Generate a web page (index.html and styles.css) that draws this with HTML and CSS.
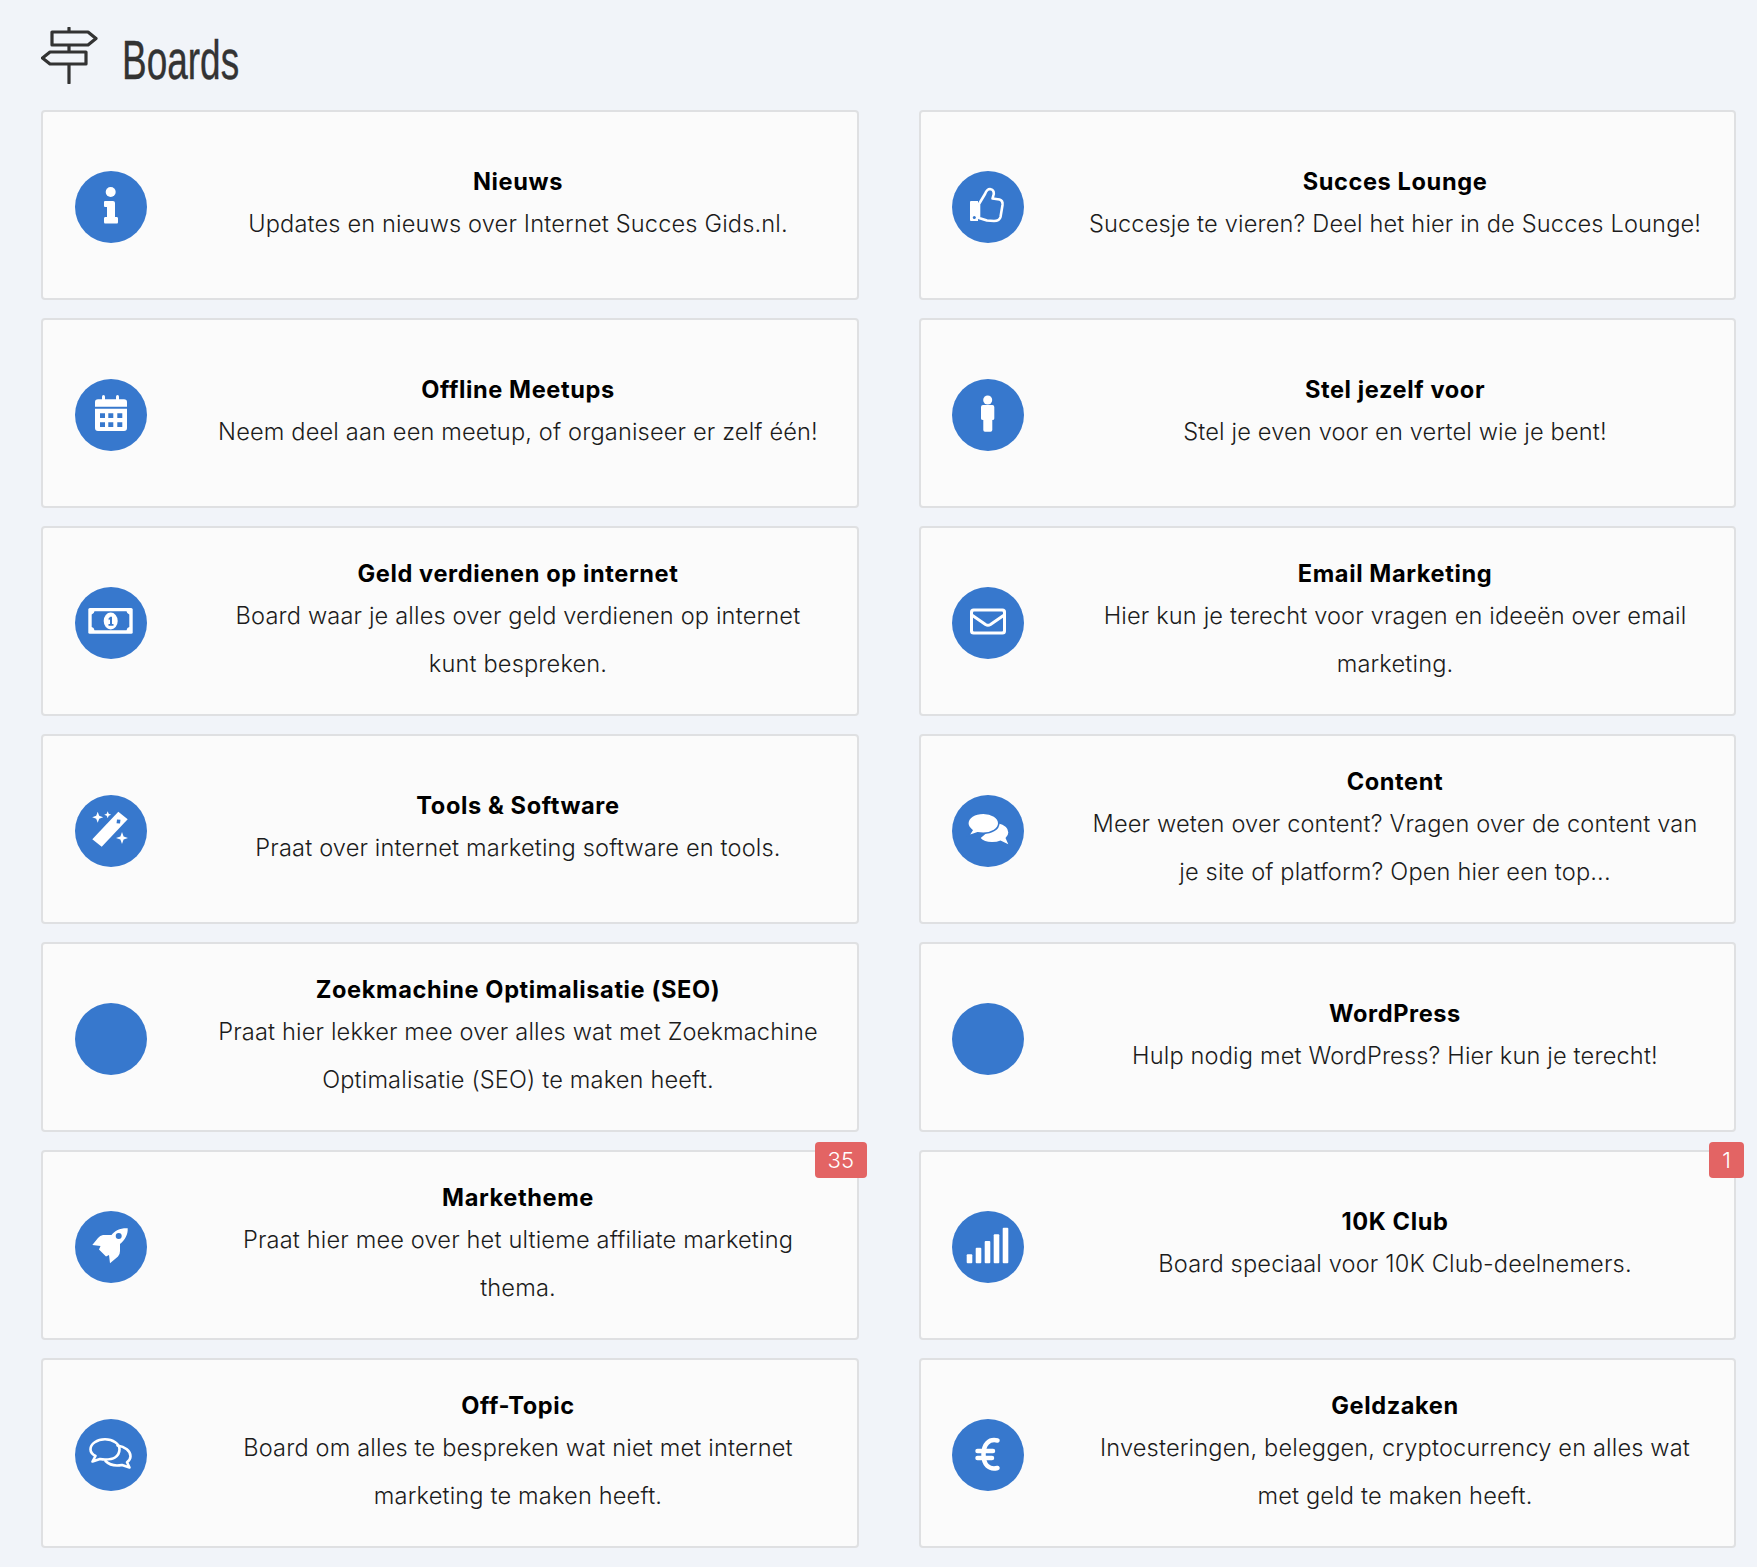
FILE: index.html
```html
<!DOCTYPE html>
<html lang="nl">
<head>
<meta charset="utf-8">
<title>Boards</title>
<link rel="stylesheet" href="styles.css">
</head>
<body>
<header class="page-head">
  <svg class="signs" viewBox="41 27 57 57"><path d="M69 28V32M69 45V52M69 64V83M52 32H88L96 38.500 88 45H52ZM86 52H50L42.500 58 50 64H86Z"/></svg>
  <h1 class="page-title">Boards</h1>
</header>
<main class="boards">
  <a class="card">
    <span class="icon"><svg viewBox="0 0 72 72"><circle class="w" cx="35.700" cy="21" r="5"/><path class="w" d="M30 30H38Q40 30 40 32V46H42Q43 46 43 47.500V51Q43 52.500 42 52.500H30Q29 52.500 29 51V47.500Q29 46 30 46H32V36H30Q29 36 29 35V31Q29 30 30 30Z"/></svg></span>
    <div class="text"><h2>Nieuws</h2><p>Updates en nieuws over Internet Succes Gids.nl.</p></div>
  </a>
  <a class="card">
    <span class="icon"><svg viewBox="0 0 72 72"><path class="w" d="M18 31Q18 30 19 30H26V50H19Q18 50 18 49Z"/><circle class="b" cx="22.300" cy="46.500" r="1.500"/><path class="o" d="M27 33L33 23Q35 18 38 18 42 18.500 41.800 23L40.500 27.500 47.500 28.500Q51 29.500 50.500 34L48.500 46Q47.500 50 42 50L35 49.500 27 47Z"/></svg></span>
    <div class="text"><h2>Succes Lounge</h2><p>Succesje te vieren? Deel het hier in de Succes Lounge!</p></div>
  </a>
  <a class="card">
    <span class="icon"><svg viewBox="0 0 72 72"><rect class="w" x="27" y="16" width="3" height="6" rx="1.500"/><rect class="w" x="41" y="16" width="3" height="6" rx="1.500"/><path class="w" d="M20 23Q20 20.300 23 20.300H49Q52 20.300 52 23V27.700H20ZM20 29.700H52V49Q52 52 49 52H23Q20 52 20 49Z"/><path class="b" d="M25 34.300h5v4.700h-5zM33.300 34.300h5v4.700h-5zM42.300 34.300h5v4.700h-5zM25 43.300h5v4.700h-5zM33.300 43.300h5v4.700h-5zM42.300 43.300h5v4.700h-5z"/></svg></span>
    <div class="text"><h2>Offline Meetups</h2><p>Neem deel aan een meetup, of organiseer er zelf één!</p></div>
  </a>
  <a class="card">
    <span class="icon"><svg viewBox="0 0 72 72"><circle class="w" cx="35.700" cy="21" r="4.500"/><path class="w" d="M31 26H40.300Q42.300 26 42.300 28V39.500Q42.300 41 40.300 41V51Q40.300 52.700 38.500 52.700H33Q31.300 52.700 31.300 51V41Q29 41 29 39.500V28Q29 26 31 26Z"/></svg></span>
    <div class="text"><h2>Stel jezelf voor</h2><p>Stel je even voor en vertel wie je bent!</p></div>
  </a>
  <a class="card">
    <span class="icon"><svg viewBox="0 0 72 72"><rect class="w" x="13.300" y="21" width="44.400" height="25.700" rx="1.500"/><path class="b" d="M19.500 24.300H51.500Q52 27 54.300 27.500V40Q52 40.500 51.500 43.300H19.500Q19 40.500 16.700 40V27.500Q19 27 19.500 24.300Z"/><ellipse class="w" cx="35.700" cy="34" rx="7" ry="8.500"/><path class="b" d="M33.500 31.500L35.300 29.800H37V37H38.500V38.700H33.500V37H35V32.300L33.800 33.200Z"/></svg></span>
    <div class="text"><h2>Geld verdienen op internet</h2><p>Board waar je alles over geld verdienen op internet kunt bespreken.</p></div>
  </a>
  <a class="card">
    <span class="icon"><svg viewBox="0 0 72 72"><rect class="w" x="18" y="21.500" width="36" height="26" rx="3.500"/><rect class="b" x="21" y="24.500" width="30" height="20" rx="1"/><path class="envl" d="M20.500 28.500L33.500 37.500Q36 39 38.500 37.500L51.500 28.500"/></svg></span>
    <div class="text"><h2>Email Marketing</h2><p>Hier kun je terecht voor vragen en ideeën over email marketing.</p></div>
  </a>
  <a class="card">
    <span class="icon"><svg viewBox="0 0 72 72"><path class="w" d="M43.300 16.700L52.700 24.300 26.700 51.700 17.300 44.300Z"/><path class="b" d="M42 24.500L45.500 24.800 45 28.500 41.500 28.200Z"/><path class="w" d="M22.700 16.800L24.200 20.800 28.200 22.300 24.200 23.800 22.700 27.800 21.200 23.800 17.200 22.300 21.200 20.800ZM32.700 16.200L33.700 18.700 36.200 19.700 33.700 20.700 32.700 23.200 31.700 20.700 29.200 19.700 31.700 18.700ZM47 37L48.600 41.400 53 43 48.600 44.600 47 49 45.400 44.600 41 43 45.400 41.400Z"/></svg></span>
    <div class="text"><h2>Tools &amp; Software</h2><p>Praat over internet marketing software en tools.</p></div>
  </a>
  <a class="card">
    <span class="icon"><svg viewBox="0 0 72 72"><path class="w" d="M28.700 43Q32 47 40 47 45 47 48.500 45.500L56.300 49.300 53.500 43Q56.300 40.500 56.300 37.500 56.300 31 46 28.300Z"/><path class="w sep" d="M31.300 18.300C22.500 18.300 15.800 22.500 15.800 28.300 15.800 31.500 18 33.800 20 35.300L16.300 41 25.500 37.800C27.300 38.200 29.300 38.300 31.300 38.300 39.800 38.300 46.800 34 46.800 28.300S39.800 18.300 31.300 18.300Z"/></svg></span>
    <div class="text"><h2>Content</h2><p>Meer weten over content? Vragen over de content van je site of platform? Open hier een top...</p></div>
  </a>
  <a class="card">
    <span class="icon"></span>
    <div class="text"><h2>Zoekmachine Optimalisatie (SEO)</h2><p>Praat hier lekker mee over alles wat met Zoekmachine Optimalisatie (SEO) te maken heeft.</p></div>
  </a>
  <a class="card">
    <span class="icon"></span>
    <div class="text"><h2>WordPress</h2><p>Hulp nodig met WordPress? Hier kun je terecht!</p></div>
  </a>
  <a class="card">
    <span class="badge">35</span>
    <span class="icon"><svg viewBox="0 0 72 72"><path class="w" d="M52.700 17.300C45 17 40 19.500 36.500 24H28Q25 24.500 23 27L17.300 34 25.500 35 24 38.500 31 45.500 34 44 35 52.300 43 45.500Q45 43.500 45 40V33C50 29 53 24 52.700 17.300Z"/><circle class="b" cx="43.700" cy="25" r="3"/></svg></span>
    <div class="text"><h2>Marketheme</h2><p>Praat hier mee over het ultieme affiliate marketing thema.</p></div>
  </a>
  <a class="card">
    <span class="badge">1</span>
    <span class="icon"><svg viewBox="0 0 72 72"><rect class="w" x="14.700" y="43.300" width="5.600" height="9" rx="1"/><rect class="w" x="23.700" y="36.700" width="5.600" height="15.600" rx="1"/><rect class="w" x="32.700" y="30" width="5.600" height="22.300" rx="1"/><rect class="w" x="41.700" y="23.300" width="5.600" height="29" rx="1"/><rect class="w" x="50.700" y="16.700" width="5.600" height="35.600" rx="1"/></svg></span>
    <div class="text"><h2>10K Club</h2><p>Board speciaal voor 10K Club-deelnemers.</p></div>
  </a>
  <a class="card">
    <span class="icon"><svg viewBox="0 0 72 72"><path class="o" d="M40 38.500C38 39.800 34 40.500 30 40.500 28 40.500 26.500 40.300 25 40L17.500 42.500 20.500 37C17.500 35.500 15.500 33 15.500 30.300 15.500 24.800 22 20.300 30 20.300S44.500 24.800 44.500 30.300C44.500 33 43 36.500 40 38.500Z"/><path class="o" d="M42.500 26.500C50 27.500 55.500 32 55.500 37.300 55.500 39.800 54 41.800 52 43.300L54.500 48.500 47 46C45.500 46.300 44 46.500 42 46.500 37 46.500 33 44.500 30.500 42"/></svg></span>
    <div class="text"><h2>Off-Topic</h2><p>Board om alles te bespreken wat niet met internet marketing te maken heeft.</p></div>
  </a>
  <a class="card">
    <span class="icon"><svg viewBox="0 0 72 72"><path class="euro" d="M45.500 21.500C37 19.500 31.500 25 31.500 35.500S37 51 45.500 49M25.500 32H41M25.500 39H40"/></svg></span>
    <div class="text"><h2>Geldzaken</h2><p>Investeringen, beleggen, cryptocurrency en alles wat met geld te maken heeft.</p></div>
  </a>
</main>
</body>
</html>
```
FILE: styles.css
```css
* { box-sizing: border-box; }
html, body { margin: 0; }
body {
  background: #f1f4f9;
  font-family: Inter, "Liberation Sans", sans-serif;
  color: #1c1c1c;
  padding: 27px 21px 20px 41px;
}
.page-head {
  display: flex;
  align-items: center;
  gap: 24px;
  height: 57px;
  margin-bottom: 26px;
}
.signs {
  width: 57px;
  height: 57px;
  fill: none;
  stroke: #333;
  stroke-width: 3.200;
  stroke-linecap: round;
  stroke-linejoin: round;
  flex: none;
}
.page-title {
  margin: 10px 0 0;
  font-family: "Liberation Sans", sans-serif;
  font-weight: 400;
  font-size: 55px;
  line-height: 57px;
  color: #333;
  -webkit-text-stroke: 0.400px #333;
  transform: scaleX(0.672);
  transform-origin: left center;
}
.boards {
  display: grid;
  grid-template-columns: 818px 817px;
  column-gap: 60px;
  row-gap: 18px;
  grid-auto-rows: 190px;
}
.card {
  position: relative;
  display: flex;
  align-items: center;
  gap: 63px;
  padding: 0 31px 0 32px;
  background: #fbfbfb;
  border: 2px solid #dfe0e2;
  border-radius: 4px;
}
.card:nth-child(even) { padding-left: 31px; }
.icon {
  flex: none;
  width: 72px;
  height: 72px;
  margin-top: 4px;
  border-radius: 50%;
  background: #3778cd;
}
.icon svg { display: block; width: 72px; height: 72px; }
.w { fill: #fff; }
.b { fill: #3778cd; }
.o { fill: none; stroke: #fff; stroke-width: 2.600; stroke-linejoin: round; stroke-linecap: round; }
.envl { fill: none; stroke: #fff; stroke-width: 3; stroke-linecap: round; }
.sep { stroke: #3778cd; stroke-width: 1.600; }
.euro { fill: none; stroke: #fff; stroke-width: 4.500; stroke-linecap: round; }
.text {
  flex: 1;
  min-width: 0;
  margin-top: 1px;
  text-align: center;
}
.text h2 {
  margin: 0;
  font-size: 23.600px;
  line-height: 36px;
  font-weight: 700;
  letter-spacing: 0.600px;
  color: #000;
}
.text p {
  margin: 0;
  font-size: 23.600px;
  line-height: 48px;
  font-weight: 350;
  letter-spacing: 0.150px;
}
.badge {
  position: absolute;
  top: -10px;
  right: -10px;
  height: 36px;
  padding: 0 13px;
  background: #e36464;
  border-radius: 4px;
  color: #fff;
  font-size: 22px;
  font-weight: 300;
  line-height: 36px;
}
```
